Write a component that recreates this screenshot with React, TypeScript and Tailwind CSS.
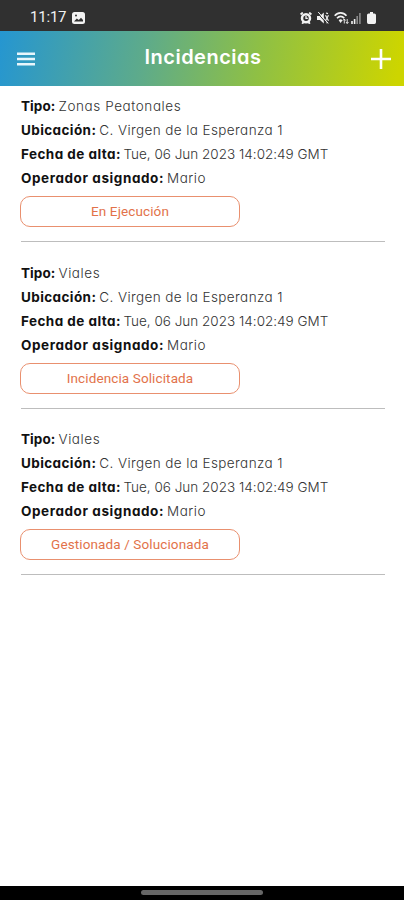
import React from "react";

interface Incident {
  id: number;
  type: string;
  location: string;
  date: string;
  operator: string;
  status: string;
}

const incidents: Incident[] = [
  {
    id: 1,
    type: "Zonas Peatonales",
    location: "C. Virgen de la Esperanza 1",
    date: "Tue, 06 Jun 2023 14:02:49 GMT",
    operator: "Mario",
    status: "En Ejecución",
  },
  {
    id: 2,
    type: "Viales",
    location: "C. Virgen de la Esperanza 1",
    date: "Tue, 06 Jun 2023 14:02:49 GMT",
    operator: "Mario",
    status: "Incidencia Solicitada",
  },
  {
    id: 3,
    type: "Viales",
    location: "C. Virgen de la Esperanza 1",
    date: "Tue, 06 Jun 2023 14:02:49 GMT",
    operator: "Mario",
    status: "Gestionada / Solucionada",
  },
];

const StatusBar = () => (
  <div className="flex h-[31px] shrink-0 items-center justify-between bg-[#303030] pt-1 pr-[28px] pl-[30px] text-[#f2f2f2]">
    <div className="flex items-center gap-[6px]">
      <span className="font-[Roboto,sans-serif] text-[15px] leading-none tracking-[-0.2px]">11:17</span>
      <svg width="13" height="12" viewBox="0 0 13 12">
        <rect width="13" height="12" rx="2.5" fill="currentColor" />
        <path d="M2 9.5 4.8 6.5l2 1.6L9 5.8l2 2.2v1.5z" fill="#303030" />
        <circle cx="4" cy="3.6" r="1" fill="#303030" />
      </svg>
    </div>
    <div className="flex items-center">
      {/* Alarm */}
      <svg className="mr-[5px]" width="12" height="12" viewBox="0 0 12 12">
        <path d="M.6 2.4 2.8.6M11.4 2.4 9.2.6M2.2 11.8l1.3-1.8M9.8 11.8 8.5 10" stroke="currentColor" strokeWidth="1.9" />
        <circle cx="6" cy="6.2" r="4" fill="#303030" stroke="currentColor" strokeWidth="2.5" />
        <path d="M6 4v2.4h1.8" fill="none" stroke="currentColor" strokeWidth="1.3" />
      </svg>
      {/* Muted */}
      <svg className="mr-[5px]" width="12" height="12" viewBox="0 0 12 12">
        <path d="M0 4h3l3.8-3.6v11.2L3 8H0z" fill="currentColor" />
        <path d="M8.5 3.2l3 5.6M11.5 3.2l-3 5.6M9 1l2 .6M9 11l2-.6" stroke="currentColor" strokeWidth="1.2" />
        <path d="M.2.8l10 11" stroke="#303030" strokeWidth="1" />
        <path d="M1.2 0l10 11.5" stroke="currentColor" strokeWidth="1" />
      </svg>
      {/* Wifi */}
      <svg className="mr-[2px]" width="15" height="12" viewBox="0 0 15 12">
        <path d="M.7 3.8C4-.1 9.2-.1 12.5 3.8M3 6.2c2.1-2.5 5.2-2.5 7.3 0" fill="none" stroke="currentColor" strokeWidth="1.6" />
        <path d="M4.7 8.2a2.6 2.6 0 0 1 3.8 0L6.6 11z" fill="currentColor" />
        <path d="M10.3 11.5V7m-1.4 1.5L10.3 7l1.2 1.5M13.2 7v4.5M12 10l1.2 1.5L14.5 10" fill="none" stroke="currentColor" strokeWidth=".9" />
      </svg>
      {/* Signal */}
      <svg className="mr-[6px]" width="10" height="12" viewBox="0 0 10 12">
        <path d="M1 12V9M3.6 12V7" stroke="currentColor" strokeWidth="1.6" />
        <path d="M6.2 12V4M8.9 12V1" stroke="#8a8a8a" strokeWidth="1.6" />
      </svg>
      {/* Battery */}
      <svg width="9" height="12" viewBox="0 0 9 12">
        <path d="M3 0h3v1.4h1.4Q9 1.4 9 3v7.2Q9 12 7.4 12H1.6Q0 12 0 10.2V3q0-1.6 1.6-1.6H3z" fill="currentColor" />
      </svg>
    </div>
  </div>
);

const Header = () => (
  <header className="flex h-[55px] shrink-0 items-center justify-between bg-[linear-gradient(100deg,#2596d1_0%,#5eab8a_36%,#8fc044_64%,#cdd500_98%)] pr-[13px] pl-[17px]">
    <svg width="18" height="14" viewBox="0 0 18 14" className="text-[#e8f6fc]">
      <path d="M0 1.7h18M0 7h18M0 12.3h18" stroke="currentColor" strokeWidth="2.6" />
    </svg>
    <h1 className="pb-[3px] text-[20px] leading-none font-semibold tracking-[0.5px] text-white">
      Incidencias
    </h1>
    <svg width="20" height="20" viewBox="0 0 20 20" className="text-white">
      <path d="M10 0v20M0 10h20" stroke="currentColor" strokeWidth="2.6" />
    </svg>
  </header>
);

const IncidentItem = ({ incident }: { incident: Incident }) => (
  <li className="h-[166.3px]">
    <div className="text-[13.5px] leading-6 font-light whitespace-nowrap text-[#333]">
      <p>
        <b className="mr-[3px] font-bold tracking-[0.1px] text-[#111]">Tipo:</b>
        <span className="tracking-[0.58px]">{incident.type}</span>
      </p>
      <p>
        <b className="mr-[3px] font-bold tracking-[0.4px] text-[#111]">Ubicación:</b>
        <span className="tracking-[0.4px]">{incident.location}</span>
      </p>
      <p>
        <b className="mr-[2.5px] font-bold tracking-[0.45px] text-[#111]">Fecha de alta:</b>
        <span className="tracking-[0.01px]">{incident.date}</span>
      </p>
      <p>
        <b className="mr-[3px] font-bold tracking-[0.58px] text-[#111]">Operador asignado:</b>
        <span className="tracking-[0.5px]">{incident.operator}</span>
      </p>
    </div>
    <div className="mt-[6px] -ml-px flex h-[31px] w-[220px] items-center justify-center rounded-[10px] border border-[#e9906f] pb-px font-[Roboto,sans-serif] text-[13.5px] tracking-[0.12px] text-[#e2724a]">
      {incident.status}
    </div>
    <hr className="mt-[14px] border-t-[1.5px] border-[#bdbdbd]" />
  </li>
);

const App = () => {
  return (
    <div className="flex h-[900px] w-[404px] flex-col overflow-hidden bg-white font-[Inter,sans-serif] [font-feature-settings:'cv11']">
      <StatusBar />
      <Header />
      <main className="flex-1 pt-[8.4px] pr-[19px] pl-[21px]">
        <ul>
          {incidents.map((incident) => (
            <IncidentItem key={incident.id} incident={incident} />
          ))}
        </ul>
      </main>
      <footer className="flex h-[14px] shrink-0 justify-center bg-black pt-[4px]">
        <div className="h-[5px] w-[122px] rounded-full bg-[#666]" />
      </footer>
    </div>
  );
};

export default App;
